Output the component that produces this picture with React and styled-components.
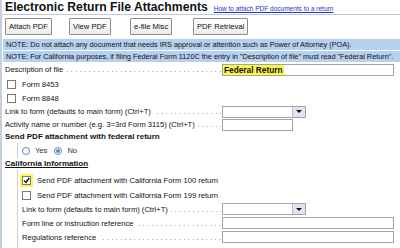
import styled, { createGlobalStyle } from "styled-components";

const Global = createGlobalStyle`
  html, body { margin: 0; padding: 0; background: #fff; }
  body { font-family: "Liberation Sans", Arial, sans-serif; color: #111; }
`;

const Page = styled.div`
  width: 400px;
  height: 248px;
  overflow: hidden;
  box-sizing: border-box;
  border-left: 2px solid #c3d0e0;
  font-size: 7.6px;
  color: #111;
`;

const Header = styled.div`
  display: flex;
  align-items: baseline;
  gap: 6px;
  height: 13px;
  padding: 1px 0 0 3px;
  border-bottom: 1px solid #b9c9dd;
`;

const Title = styled.h1`
  margin: 0;
  font-size: 12.2px;
  font-weight: bold;
  line-height: 13px;
  white-space: nowrap;
`;

const HelpLink = styled.a`
  font-size: 6.5px;
  color: #2233cc;
  text-decoration: underline;
  white-space: nowrap;
`;

const Toolbar = styled.div`
  display: grid;
  grid-template-columns: 64px 61px 63px auto;
  padding: 3px 0 3px 3px;
`;

const Button = styled.button`
  justify-self: start;
  height: 17px;
  padding: 0 3px;
  font: 7.6px "Liberation Sans", Arial, sans-serif;
  color: #111;
  background: linear-gradient(#ffffff, #ececec);
  border: 1px solid #8c8c8c;
  border-radius: 1px;
`;

const Note = styled.div`
  margin: 1px 0 0 1px;
  padding: 0 3px;
  height: 11px;
  line-height: 11px;
  font-size: 7.3px;
  background: #b6d0ef;
  white-space: nowrap;
  overflow: hidden;
`;

const Row = styled.div`
  display: grid;
  grid-template-columns: ${(p) => p.$lw || 217}px auto;
  align-items: center;
  height: ${(p) => p.$h || 13}px;
  padding-left: ${(p) => p.$pl ?? 3}px;
`;

const Label = styled.div`
  display: flex;
  align-items: baseline;
  white-space: nowrap;
  overflow: hidden;
  color: #111;
`;

const Dots = styled.span`
  flex: 1;
  align-self: flex-end;
  height: 1px;
  margin: 0 1px 2px 3px;
  background-image: linear-gradient(to left, #9a9a9a 1px, transparent 1px);
  background-size: 4.5px 1px;
  background-position: right;
  background-repeat: repeat-x;
`;

const Field = styled.div`
  box-sizing: border-box;
  width: ${(p) => p.$w}px;
  height: 12px;
  border: 1px solid #a3a3a3;
  background: #fff;
  display: flex;
  align-items: center;
  position: relative;
`;

const Highlight = styled.span`
  background: #fff64a;
  font-weight: bold;
  font-size: 8.3px;
  padding: 0 1px;
  line-height: 10px;
`;

const DropArrow = styled.span`
  position: absolute;
  right: 0;
  top: 0;
  bottom: 0;
  width: 12px;
  background: #dfe6ef;
  border-left: 1px solid #b4bcc8;
  display: flex;
  align-items: center;
  justify-content: center;
  &::after {
    content: "";
    border-left: 3px solid transparent;
    border-right: 3px solid transparent;
    border-top: 3px solid #111;
  }
`;

const CheckLine = styled.div`
  display: flex;
  align-items: center;
  gap: 6px;
  height: ${(p) => p.$h || 15}px;
  padding-left: ${(p) => p.$pl ?? 5}px;
`;

const Box = styled.span`
  box-sizing: border-box;
  width: 9px;
  height: 9px;
  border: 1px solid #7a7a7a;
  background: #fff;
  display: flex;
  align-items: center;
  justify-content: center;
  outline: ${(p) => (p.$hl ? "2px solid #fff64a" : "none")};
`;

const Heading = styled.div`
  font-weight: bold;
  font-size: 8px;
  height: ${(p) => p.$h || 12}px;
  line-height: ${(p) => p.$h || 12}px;
  padding-left: 3px;
  text-decoration: ${(p) => (p.$u ? "underline" : "none")};
`;

const Indent = styled.div`
  margin-left: 15px;
  border-left: 1px solid #c9ced6;
  padding: ${(p) => p.$pt || 0}px 0 ${(p) => p.$pb || 0}px 4px;
`;

const Radios = styled.div`
  display: flex;
  align-items: center;
  gap: 4px;
  height: 15px;
`;

const Radio = styled.span`
  box-sizing: border-box;
  width: 8px;
  height: 8px;
  border-radius: 50%;
  border: 1px solid #5f86b8;
  display: flex;
  align-items: center;
  justify-content: center;
  margin-right: 1px;
  &::after {
    content: "";
    display: ${(p) => (p.$on ? "block" : "none")};
    width: 4px;
    height: 4px;
    border-radius: 50%;
    background: #5f86b8;
  }
`;

const RadioText = styled.span`
  color: #333;
  margin-right: 3px;
`;

function Check({ checked, hl }) {
  return (
    <Box $hl={hl}>
      {checked && (
        <svg width="7" height="7" viewBox="0 0 7 7">
          <path d="M1 3.5 L3 5.5 L6.2 1" stroke="#111" strokeWidth="1.4" fill="none" />
        </svg>
      )}
    </Box>
  );
}

function FormRow({ label, children, h, lw, pl }) {
  return (
    <Row $h={h} $lw={lw} $pl={pl}>
      <Label>
        {label}
        <Dots />
      </Label>
      {children}
    </Row>
  );
}

export default function App() {
  return (
    <Page>
      <Global />
      <Header>
        <Title>Electronic Return File Attachments</Title>
        <HelpLink href="#">How to attach PDF documents to a return</HelpLink>
      </Header>
      <Toolbar>
        <Button>Attach PDF</Button>
        <Button>View PDF</Button>
        <Button>e-file Misc</Button>
        <Button>PDF Retrieval</Button>
      </Toolbar>
      <Note>NOTE: Do not attach any document that needs IRS approval or attention such as Power of Attorney (POA).</Note>
      <Note>NOTE: For California purposes, if filing Federal Form 1120C the entry in "Description of file" must read "Federal Return".</Note>
      <FormRow label="Description of file" h={15}>
        <Field $w={172}>
          <Highlight>Federal Return</Highlight>
        </Field>
      </FormRow>
      <CheckLine>
        <Check />
        Form 8453
      </CheckLine>
      <CheckLine $h={13}>
        <Check />
        Form 8848
      </CheckLine>
      <FormRow label="Link to form (defaults to main form) (Ctrl+T)">
        <Field $w={84}>
          <DropArrow />
        </Field>
      </FormRow>
      <FormRow label="Activity name or number (e.g. 3=3rd Form 3115) (Ctrl+T)">
        <Field $w={71} />
      </FormRow>
      <Heading>Send PDF attachment with federal return</Heading>
      <Indent>
        <Radios>
          <Radio />
          <RadioText>Yes</RadioText>
          <Radio $on />
          <RadioText>No</RadioText>
        </Radios>
      </Indent>
      <Heading $u>California Information</Heading>
      <Indent $pt={3} $pb={4}>
        <CheckLine $pl={0}>
          <Check checked hl />
          Send PDF attachment with California Form 100 return
        </CheckLine>
        <CheckLine $pl={0} $h={14}>
          <Check />
          Send PDF attachment with California Form 199 return
        </CheckLine>
        <FormRow label="Link to form (defaults to main form) (Ctrl+T)" h={14} lw={200} pl={0}>
          <Field $w={84}>
            <DropArrow />
          </Field>
        </FormRow>
        <FormRow label="Form line or instruction reference" h={14} lw={200} pl={0}>
          <Field $w={172} />
        </FormRow>
        <FormRow label="Regulations reference" h={14} lw={200} pl={0}>
          <Field $w={172} />
        </FormRow>
      </Indent>
    </Page>
  );
}
